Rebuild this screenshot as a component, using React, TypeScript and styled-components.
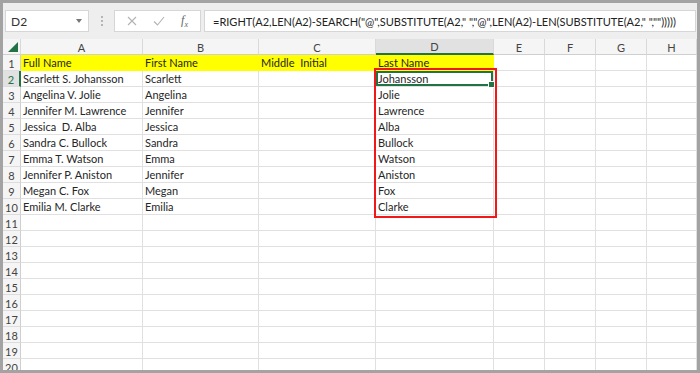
import React from "react";
import styled, { createGlobalStyle, css } from "styled-components";

const Global = createGlobalStyle`
  html, body { margin: 0; padding: 0; background: #ffffff; }
  body { font-family: "Lato", "Liberation Sans", sans-serif; }
  * { box-sizing: border-box; }
`;

const Frame = styled.div`
  width: 700px;
  height: 373px;
  border: 3px solid #a3a3a3;
  overflow: hidden;
  display: flex;
  flex-direction: column;
  background: #ffffff;
`;

const Toolbar = styled.div`
  height: 36px;
  flex: none;
  display: flex;
  align-items: center;
  padding: 0 1px 0 2px;
  background: #eeeeee;
`;

const NameBox = styled.div`
  width: 84px;
  height: 22px;
  background: #fff;
  border: 1px solid #d6d6d6;
  display: flex;
  align-items: center;
  justify-content: space-between;
  padding: 0 6px 0 5px;
  font-size: 12px;
  color: #333;
`;

const Caret = styled.span`
  width: 0;
  height: 0;
  border-left: 3px solid transparent;
  border-right: 3px solid transparent;
  border-top: 4px solid #777;
`;

const Grip = styled.div`
  width: 25px;
  display: flex;
  flex-direction: column;
  align-items: center;
  gap: 2px;
`;

const Dot = styled.span`
  width: 2px;
  height: 2px;
  background: #b5b5b5;
`;

const FxButtons = styled.div`
  width: 87px;
  height: 22px;
  background: #fff;
  border: 1px solid #d6d6d6;
  display: flex;
  align-items: center;
  justify-content: space-around;
  padding: 0 4px;
`;

const Fx = styled.span`
  font-family: "Liberation Serif", serif;
  font-style: italic;
  font-size: 12px;
  color: #666;
  sub { font-size: 8px; }
`;

const Formula = styled.div`
  flex: 1;
  margin-left: 3px;
  height: 22px;
  background: #fff;
  border: 1px solid #d6d6d6;
  display: flex;
  align-items: center;
  padding-left: 8px;
  font-size: 11px;
  color: #222;
  white-space: pre;
  overflow: hidden;
`;

const Sheet = styled.div`
  position: relative;
  flex: 1;
  display: grid;
  grid-template-columns: 18px 122px 116px 117px 118px 51px 51px 51px 50px;
  grid-auto-rows: 16px;
  align-content: start;
  overflow: hidden;
`;

const HeadCell = styled.div<{ $active?: boolean }>`
  background: ${(p) => (p.$active ? "#e1e1e1" : "#f5f5f5")};
  border-right: 1px solid #d9d9d9;
  border-bottom: ${(p) => (p.$active ? "2px solid #217346" : "1px solid #cfcfcf")};
  color: #444;
  font-size: 11px;
  display: flex;
  align-items: center;
  justify-content: center;
  padding-top: 1px;
`;

const Corner = styled(HeadCell)`
  position: relative;
  &::after {
    content: "";
    position: absolute;
    right: 2px;
    bottom: 2px;
    width: 0;
    height: 0;
    border-left: 10px solid transparent;
    border-bottom: 10px solid #217346;
  }
`;

const RowHead = styled.div<{ $active?: boolean }>`
  background: ${(p) => (p.$active ? "#e1e1e1" : "#f5f5f5")};
  border-right: ${(p) => (p.$active ? "2px solid #217346" : "1px solid #cfcfcf")};
  border-bottom: 1px solid #dcdcdc;
  color: ${(p) => (p.$active ? "#217346" : "#444")};
  font-size: 11px;
  display: flex;
  align-items: center;
  justify-content: center;
  padding-top: 1px;
`;

const Cell = styled.div<{ $fill?: boolean; $selected?: boolean }>`
  position: relative;
  border-right: 1px solid #e0e0e0;
  border-bottom: 1px solid #e0e0e0;
  padding: 1px 0 0 2px;
  font-size: 11px;
  line-height: 14px;
  color: #262626;
  white-space: pre;
  overflow: visible;
  ${(p) =>
    p.$fill &&
    css`
      background: #ffff00;
      border-color: #ffff00;
    `}
  ${(p) =>
    p.$selected &&
    css`
      box-shadow: inset 0 0 0 2px #217346;
      &::after {
        content: "";
        position: absolute;
        right: -2px;
        bottom: -2px;
        width: 5px;
        height: 5px;
        background: #217346;
        border: 1px solid #fff;
        z-index: 2;
      }
    `}
`;

const Highlight = styled.div`
  position: absolute;
  left: 371px;
  top: 29px;
  width: 123px;
  height: 150px;
  border: 2px solid #f01818;
  pointer-events: none;
  z-index: 3;
`;

const columns = ["A", "B", "C", "D", "E", "F", "G", "H"];

const data: string[][] = [
  ["Full Name", "First Name", "Middle  Initial", "Last Name"],
  ["Scarlett S. Johansson", "Scarlett", "", "Johansson"],
  ["Angelina V. Jolie", "Angelina", "", "Jolie"],
  ["Jennifer M. Lawrence", "Jennifer", "", "Lawrence"],
  ["Jessica  D. Alba", "Jessica", "", "Alba"],
  ["Sandra C. Bullock", "Sandra", "", "Bullock"],
  ["Emma T. Watson", "Emma", "", "Watson"],
  ["Jennifer P. Aniston", "Jennifer", "", "Aniston"],
  ["Megan C. Fox", "Megan", "", "Fox"],
  ["Emilia M. Clarke", "Emilia", "", "Clarke"],
];

const formula =
  '=RIGHT(A2,LEN(A2)-SEARCH("@",SUBSTITUTE(A2," ","@",LEN(A2)-LEN(SUBSTITUTE(A2," ","")))))';

export default function App() {
  const rows = Array.from({ length: 20 }, (_, i) => i + 1);
  return (
    <>
      <Global />
      <Frame>
        <Toolbar>
          <NameBox>
            D2
            <Caret />
          </NameBox>
          <Grip>
            <Dot />
            <Dot />
            <Dot />
          </Grip>
          <FxButtons>
            <svg width="10" height="10" viewBox="0 0 10 10">
              <path d="M1 1L9 9M9 1L1 9" stroke="#b3b3b3" strokeWidth="1.1" fill="none" />
            </svg>
            <svg width="12" height="10" viewBox="0 0 12 10">
              <path d="M1 5.5L4.5 9L11 1" stroke="#b3b3b3" strokeWidth="1.1" fill="none" />
            </svg>
            <Fx>
              f<sub>x</sub>
            </Fx>
          </FxButtons>
          <Formula>{formula}</Formula>
        </Toolbar>
        <Sheet>
          <Corner />
          {columns.map((c) => (
            <HeadCell key={c} $active={c === "D"}>
              {c}
            </HeadCell>
          ))}
          {rows.map((r) => (
            <React.Fragment key={r}>
              <RowHead $active={r === 2}>{r}</RowHead>
              {columns.map((c, ci) => {
                const text = data[r - 1]?.[ci] ?? "";
                return (
                  <Cell
                    key={c}
                    $fill={r === 1 && ci < 4}
                    $selected={r === 2 && c === "D"}
                  >
                    {text}
                  </Cell>
                );
              })}
            </React.Fragment>
          ))}
          <Highlight />
        </Sheet>
      </Frame>
    </>
  );
}
